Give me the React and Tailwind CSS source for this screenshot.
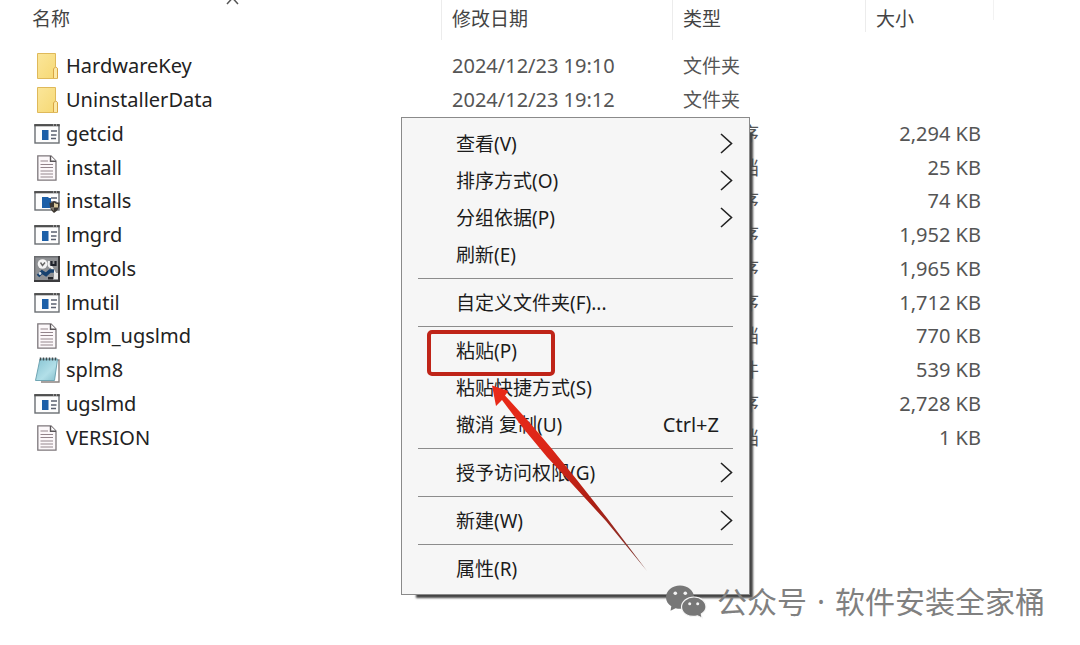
const FolderIcon = () => (
    <svg width="26" height="28" viewBox="0 0 26 28" className="shrink-0" aria-hidden="true">
        <defs>
            <linearGradient id="folder" x1="0" y1="0" x2="1" y2="1">
                <stop offset="0" stopColor="#fbe69a" />
                <stop offset="1" stopColor="#f6d873" />
            </linearGradient>
        </defs>
        <path d="M3.5 1.5H21.5V14.5L23.5 16.5V26.5H3.5Z" fill="url(#folder)" stroke="#dfb95a" />
        <path d="M19.5 26V17Q21.5 13.5 23.5 16.5V26" fill="#fce9a6" stroke="#d8a544" />
    </svg>
)

const AppIcon = ({ shield }) => (
    <svg width="26" height="28" viewBox="0 0 26 28" className="shrink-0" aria-hidden="true">
        <rect x="1" y="5" width="24" height="18" fill="#fdfdfd" stroke="#6a6e73" strokeWidth="1.4" />
        <path d="M0.3 5.2H25.7" stroke="#4f4f4f" strokeWidth="2.2" />
        <path d="M19 5H20M22 5H23" stroke="#ddd" strokeWidth="1" />
        <rect x="8" y="10" width="6.5" height="10" fill="#1c5fa8" />
        <path d="M17 11H23M17 15H22.5M17 18.5H22" stroke="#5b6170" strokeWidth="1.5" />
        {shield && (
            <>
                <path d="M8 11H17V21H8Z" fill="#1c5fa8" />
                <path d="M15.5 15.5Q18 16.5 20 14Q22.5 16 25.5 15.5Q26 22.5 20 26Q15.5 22.5 15.5 15.5Z" fill="#3a352f" />
                <path d="M20 15.5Q22 17 24 17V20.5H20Z" fill="#d8c79a" />
                <path d="M16.5 20H20V24Q17 22.5 16.5 20Z" fill="#7d776a" />
            </>
        )}
    </svg>
)

const TextIcon = () => (
    <svg width="26" height="28" viewBox="0 0 26 28" className="shrink-0" aria-hidden="true">
        <path d="M3.8 1.8H17L22 7V26.2H3.8Z" fill="#fcf8fa" stroke="#7d777b" strokeWidth="1.3" />
        <path d="M16.5 2V7.2H22" fill="#fff" stroke="#5a5558" strokeWidth="1.4" />
        <path d="M6.5 7H14M6.5 10.5H19M6.5 13.5H19M6.5 17H19M6.5 20H19M6.5 23H19" stroke="#93858c" strokeWidth="1.2" />
    </svg>
)

const ToolsIcon = () => (
    <svg width="26" height="28" viewBox="0 0 26 28" className="shrink-0" aria-hidden="true">
        <rect x="0" y="1" width="26" height="26" fill="#8f9194" />
        <path d="M0.7 26V1.7H25" fill="none" stroke="#6b6d70" strokeWidth="1.4" />
        <path d="M0 26H25V1" fill="none" stroke="#3b3b3d" strokeWidth="2" />
        <circle cx="8.5" cy="9" r="4.8" fill="#f4f4f4" />
        <path d="M6.5 7.5L8.5 10.5L11 7.5" fill="none" stroke="#666" strokeWidth="1.4" />
        <path d="M15 6Q13.5 12 17.5 12L22 20" fill="none" stroke="#f0f0f0" strokeWidth="2.2" />
        <path d="M17.5 6V10H21.5V6" fill="none" stroke="#1e222b" strokeWidth="2.2" />
        <path d="M4 21L8 17L12 19.5L16 16H20" fill="none" stroke="#17416e" strokeWidth="3.6" />
        <circle cx="6" cy="18.5" r="1.4" fill="#d8dde2" />
        <path d="M14 22H19V24.5H14Z" fill="#24262b" />
        <path d="M20 18H24V24H20Z" fill="#e8e8e8" />
    </svg>
)

const NotepadIcon = () => (
    <svg width="26" height="28" viewBox="0 0 26 28" className="shrink-0" aria-hidden="true">
        <defs>
            <linearGradient id="notepad" x1="0" y1="0" x2="1" y2="1">
                <stop offset="0" stopColor="#86c3d2" />
                <stop offset="0.6" stopColor="#b2dfe8" />
                <stop offset="1" stopColor="#86bfcc" />
            </linearGradient>
        </defs>
        <path d="M22 4H25V26H7" fill="#fff" stroke="#8a8280" strokeWidth="1.4" />
        <path d="M6 3H23.5L20.5 24.5H1.5Z" fill="url(#notepad)" stroke="#6fa5b3" />
        <path d="M6.5 1.5V4.5M9.5 1.5V4.5M12.5 1.5V4.5M15.5 1.5V4.5M18.5 1.5V4.5M21.5 1.5V4.5" stroke="#3f4a4e" strokeWidth="1.5" />
    </svg>
)

const Chevron = () => (
    <svg width="13" height="22" viewBox="0 0 13 22" fill="none" stroke="#222" strokeWidth="1.6" aria-hidden="true">
        <path d="M1 1L11.5 10.5L1 20" />
    </svg>
)

const WechatIcon = () => (
    <svg width="42" height="36" viewBox="0 0 42 36" fill="#777777" aria-hidden="true">
        <path d="M15 1.5C7 1.5 1 6.8 1 13.2C1 17 3 20.2 6.3 22.3L5.5 26.8L10.6 24.2C20 26.5 29 21.5 29 13.2C29 6.8 23 1.5 15 1.5Z" />
        <path d="M29 13C22 13 16.5 17.5 16.5 23C16.5 29.5 24 34 32.5 31.8L37.2 34L36.3 30C39.3 28.2 41 25.8 41 23C41 17.5 36 13 29 13Z" stroke="#f6f6f6" strokeWidth="1.2" />
        <g fill="#f4f4f4">
            <circle cx="10.3" cy="9.3" r="1.8" />
            <circle cx="20.3" cy="9.3" r="1.8" />
            <circle cx="24.7" cy="19.8" r="1.5" />
            <circle cx="32.7" cy="19.8" r="1.5" />
        </g>
    </svg>
)

const files = [
    { name: 'HardwareKey', icon: <FolderIcon />, date: '2024/12/23 19:10', type: '文件夹' },
    { name: 'UninstallerData', icon: <FolderIcon />, date: '2024/12/23 19:12', type: '文件夹' },
    { name: 'getcid', icon: <AppIcon />, type: '应用程序', size: '2,294 KB' },
    { name: 'install', icon: <TextIcon />, type: '文本文档', size: '25 KB' },
    { name: 'installs', icon: <AppIcon shield />, type: '应用程序', size: '74 KB' },
    { name: 'lmgrd', icon: <AppIcon />, type: '应用程序', size: '1,952 KB' },
    { name: 'lmtools', icon: <ToolsIcon />, type: '应用程序', size: '1,965 KB' },
    { name: 'lmutil', icon: <AppIcon />, type: '应用程序', size: '1,712 KB' },
    { name: 'splm_ugslmd', icon: <TextIcon />, type: '文本文档', size: '770 KB' },
    { name: 'splm8', icon: <NotepadIcon />, type: '文本文件', size: '539 KB' },
    { name: 'ugslmd', icon: <AppIcon />, type: '应用程序', size: '2,728 KB' },
    { name: 'VERSION', icon: <TextIcon />, type: '文本文档', size: '1 KB' },
]

const menuGroups = [
    [
        { label: '查看(V)', submenu: true },
        { label: '排序方式(O)', submenu: true },
        { label: '分组依据(P)', submenu: true },
        { label: '刷新(E)' },
    ],
    [{ label: '自定义文件夹(F)...' }],
    [
        { label: '粘贴(P)', marked: true },
        { label: '粘贴快捷方式(S)' },
        { label: '撤消 复制(U)', shortcut: 'Ctrl+Z' },
    ],
    [{ label: '授予访问权限(G)', submenu: true }],
    [{ label: '新建(W)', submenu: true }],
    [{ label: '属性(R)' }],
]

const FileTable = () => (
    <table className="w-full table-fixed border-collapse text-left text-[20px] leading-[26px] text-[#555]">
        <colgroup>
            <col className="w-[441px]" />
            <col className="w-[231px]" />
            <col className="w-[193px]" />
            <col className="w-[128px]" />
            <col />
        </colgroup>
        <thead>
            <tr className="align-top text-[19px] text-[#444]">
                <th className="pb-[9px] font-normal">
                    <div className="relative h-10 pt-[6px] pl-8">
                        <button>名称</button>
                        <svg className="absolute top-0 left-[226px]" width="13" height="5" fill="none" stroke="#555" strokeWidth="1.5" aria-hidden="true">
                            <path d="M1 4L6.5 -2L12 4" />
                        </svg>
                    </div>
                </th>
                <th className="font-normal">
                    <div className="h-10 border-l border-[#ececec] pt-[6px] pl-[10px]"><button>修改日期</button></div>
                </th>
                <th className="font-normal">
                    <div className="h-10 border-l border-[#ececec] pt-[6px] pl-[10px]"><button>类型</button></div>
                </th>
                <th className="font-normal">
                    <div className="h-8 border-l border-[#ececec] pt-[6px] pl-[10px]"><button>大小</button></div>
                </th>
                <td>
                    <div className="h-5 border-l border-[#f2f2f2]" />
                </td>
            </tr>
        </thead>
        <tbody>
            {files.map((file) => (
                <tr key={file.name} className="h-[34px] nth-[4n]:h-[33px]">
                    <td className="p-0 pl-[34px]">
                        <div className="flex items-center gap-[6px] text-[#222]">
                            {file.icon}
                            <span>{file.name}</span>
                        </div>
                    </td>
                    <td className="p-0 pl-[11px]">{file.date}</td>
                    <td className="p-0 pl-[11px] text-[19px]">{file.type}</td>
                    <td className="p-0 pr-3 text-right">{file.size}</td>
                    <td />
                </tr>
            ))}
        </tbody>
    </table>
)

const ContextMenu = () => (
    <div
        role="menu"
        className="absolute top-[117px] left-[401px] w-[349px] border border-[#8a8a8a] bg-[#f6f6f6] py-[7px] text-[19px] leading-[26px] text-[#1c1c1c] shadow-[9px_9px_2px_-6px_#444]"
    >
        {menuGroups.map((group, i) => (
            <div key={i}>
                {i > 0 && <hr className="mx-4 my-[5px] border-[#8c8c8c]" />}
                {group.map((item) => (
                    <button
                        key={item.label}
                        role="menuitem"
                        className="relative flex h-[37px] w-full items-center justify-between pr-4 pl-[54px] text-left"
                    >
                        {item.label}
                        {item.submenu && <Chevron />}
                        {item.shortcut && <span className="pr-[14px] text-[20px]">{item.shortcut}</span>}
                        {item.marked && (
                            <span className="absolute -top-[2px] left-[25px] h-[46px] w-32 rounded-[5px] border-4 border-[#bf2418]" />
                        )}
                    </button>
                ))}
            </div>
        ))}
        <svg className="absolute top-[266px] left-[88px]" width="160" height="190" viewBox="0 0 160 190" aria-hidden="true">
            <defs>
                <linearGradient id="arrow" x1="0" y1="0" x2="1" y2="1">
                    <stop offset="0" stopColor="#ea2a18" />
                    <stop offset="0.35" stopColor="#dc2618" />
                    <stop offset="0.65" stopColor="#ab1f14" />
                    <stop offset="1" stopColor="#7a3a34" />
                </linearGradient>
            </defs>
            <path d="M2 1.5L18.5 7L15 11.5L40 39L62 65L87 96L117 134L157 187L116 137L83 101L57 73L33 44L12 16L6 22Z" fill="url(#arrow)" />
        </svg>
    </div>
)

export default function App() {
    return (
        <main className="relative min-h-screen overflow-hidden bg-white font-['Noto_Sans','Noto_Sans_CJK_SC',sans-serif]">
            <FileTable />
            <ContextMenu />
            <div className="absolute top-[583px] left-[665px] flex items-center gap-[10px] text-[30px] leading-[38px] whitespace-nowrap text-[#808080]">
                <WechatIcon />
                <span>公众号</span>
                <span>·</span>
                <span>软件安装全家桶</span>
            </div>
        </main>
    )
}
